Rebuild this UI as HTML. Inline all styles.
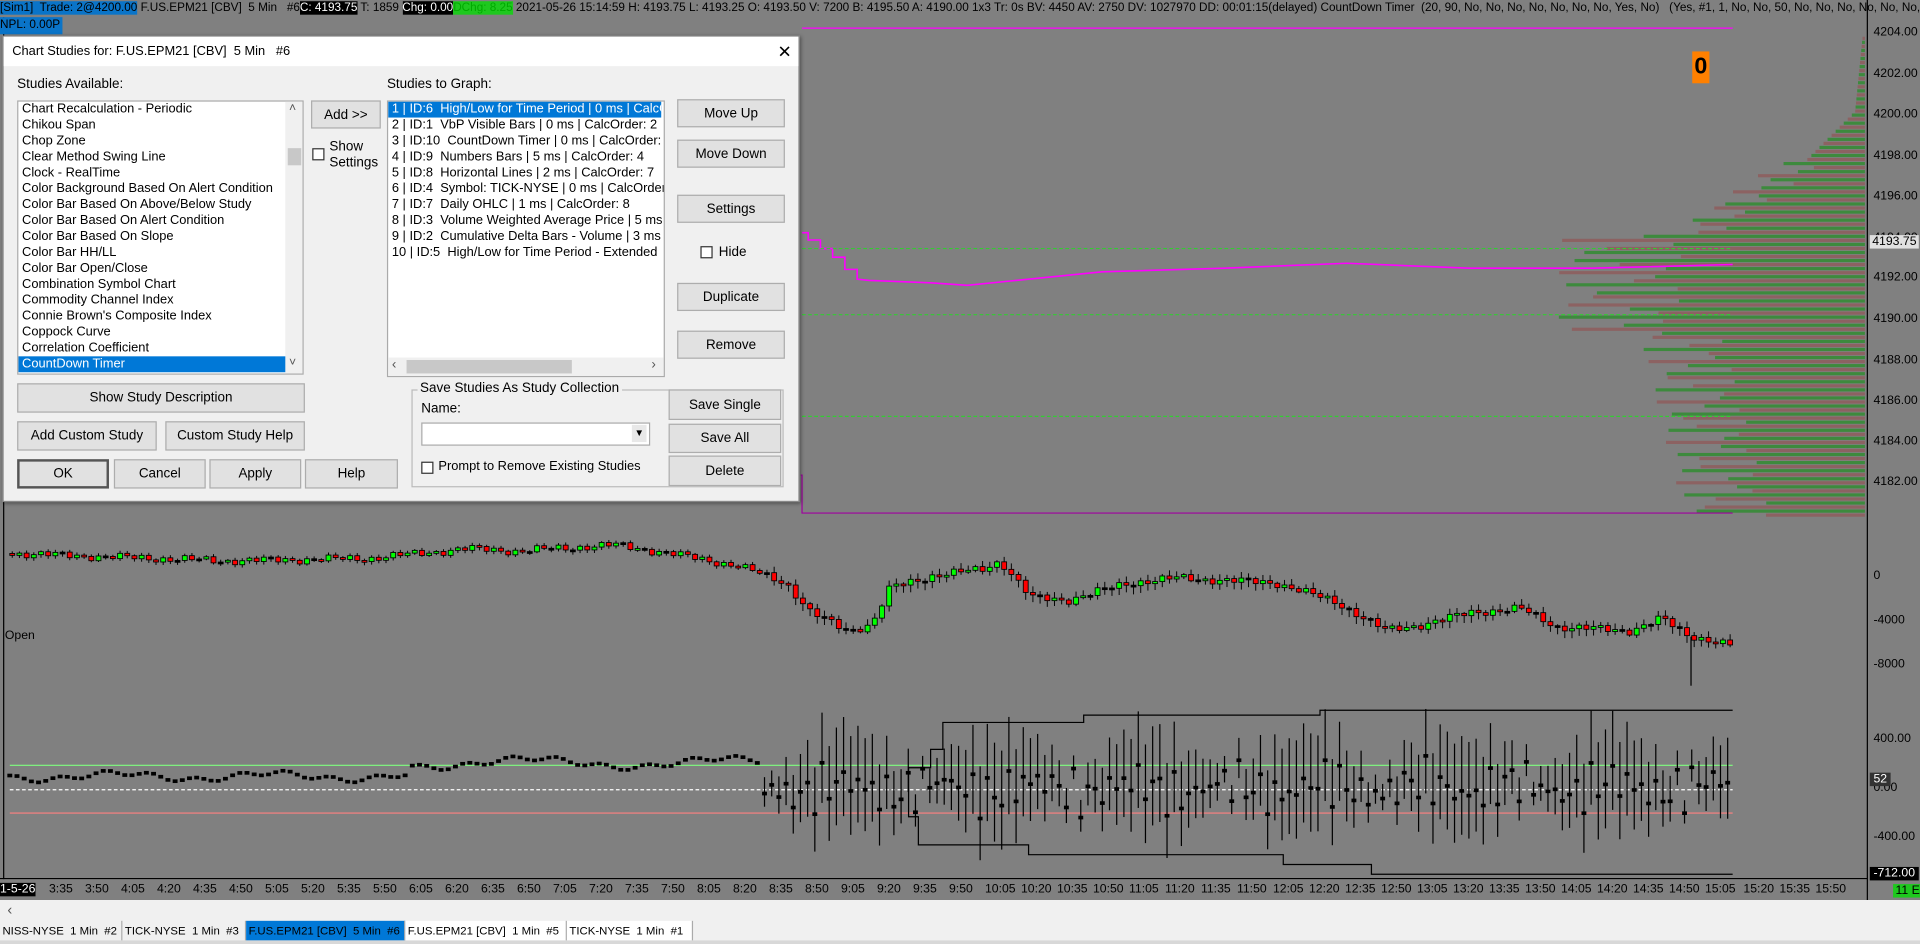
<!DOCTYPE html>
<html><head><meta charset="utf-8"><style>
html,body{margin:0;padding:0;width:1920px;height:944px;overflow:hidden;background:#808080}
#w{position:absolute;left:0;top:0;width:1568px;height:771px;transform:scale(1.22449);transform-origin:0 0;font-family:"Liberation Sans",sans-serif;font-size:11px;color:#000;background:#808080;overflow:hidden}
.a{position:absolute;white-space:nowrap}
.btn{position:absolute;background:#e1e1e1;border:1px solid #adadad;box-sizing:border-box;text-align:center;font-size:11px;display:flex;align-items:center;justify-content:center;white-space:nowrap}
.cb{position:absolute;width:10px;height:10px;border:1px solid #333;background:#fff;box-sizing:border-box}
.li{height:13px;line-height:13px;padding-left:3px;font-size:10.5px;white-space:nowrap;overflow:hidden}
.ax{position:absolute;left:1530px;font-size:10px}
.tm{position:absolute;top:721px;font-size:10px;color:#000}
.tab{position:absolute;top:752px;height:16px;line-height:16px;font-size:9.3px;border-right:1px solid #aaa;background:#f0f0f0;padding-left:2px;box-sizing:border-box;white-space:nowrap;overflow:hidden}
</style></head><body><div id="w">
<svg id="ch" width="1568" height="771" style="position:absolute;left:0;top:0"></svg>

<div class="a" style="left:0;top:0;height:14px;line-height:14px;font-size:9.6px">
<span style="background:#0a74c8;color:#000">[Sim1]&nbsp; Trade: 2@4200.00</span> F.US.EPM21 [CBV]&nbsp; 5 Min&nbsp;&nbsp; #6<span style="background:#000;color:#fff">C: 4193.75</span> T: 1859 <span style="background:#000;color:#fff">Chg: 0.00</span><span style="background:#1ec81e;color:#0a0">DChg: 8.25</span> 2021-05-26 15:14:59 H: 4193.75 L: 4193.25 O: 4193.50 V: 7200 B: 4195.50 A: 4190.00 1x3 Tr: 0s BV: 4450 AV: 2750 DV: 1027970 DD: 00:01:15(delayed) CountDown Timer&nbsp; (20, 90, No, No, No, No, No, No, No, Yes, No)&nbsp;&nbsp; (Yes, #1, 1, No, No, 50, No, No, No, No, No, No, No,</div>
<div class="a" style="left:0;top:14px;height:14px;line-height:14px;font-size:9.6px;background:#0a74c8;padding-right:2px">NPL: 0.00P</div>

<div class="a" style="left:1382px;top:42px;width:14px;height:26px;background:#ff8000;font-weight:bold;font-size:19px;line-height:26px;text-align:center">0</div>
<div class="a" style="left:4px;top:514px;font-size:10px">Open</div>

<div class="ax" style="top:21px">4204.00</div><div class="ax" style="top:55px">4202.00</div><div class="ax" style="top:88px">4200.00</div><div class="ax" style="top:122px">4198.00</div><div class="ax" style="top:155px">4196.00</div><div class="ax" style="top:189px">4194.00</div>
<div class="ax" style="top:192px;background:#e0e0e0;left:1527px;padding:0 2px">4193.75</div>
<div class="ax" style="top:221px">4192.00</div><div class="ax" style="top:255px">4190.00</div><div class="ax" style="top:289px">4188.00</div><div class="ax" style="top:322px">4186.00</div><div class="ax" style="top:355px">4184.00</div><div class="ax" style="top:388px">4182.00</div>
<div class="ax" style="top:465px">0</div><div class="ax" style="top:501px">-4000</div><div class="ax" style="top:537px">-8000</div>
<div class="ax" style="top:598px">400.00</div><div class="ax" style="top:638px">0.00</div><div class="ax" style="top:678px">-400.00</div>
<div class="ax" style="top:631px;background:#333;color:#fff;left:1527px;padding:0 3px">52</div>
<div class="ax" style="top:708px;background:#000;color:#fff;left:1527px;padding:0 3px">-712.00</div>
<div class="a" style="left:1546px;top:722px;background:#1ec81e;font-size:10px;padding:0 2px">11 E</div>

<div class="a" style="left:0;top:721px;background:#000;color:#fff;font-size:10px">1-5-26</div>
<div id="times"></div>

<div class="a" style="left:0;top:735px;width:1568px;height:17px;background:#f0f0f0"></div>
<div class="a" style="left:6px;top:736px;font-size:12px;color:#555">‹</div>
<div class="a" style="left:0;top:751px;width:1568px;height:20px;background:#f0f0f0"></div>
<div class="tab" style="left:0;width:100px">NISS-NYSE&nbsp; 1 Min&nbsp; #2</div>
<div class="tab" style="left:100px;width:101px">TICK-NYSE&nbsp; 1 Min&nbsp; #3</div>
<div class="tab" style="left:201px;width:130px;background:#0078d7">F.US.EPM21 [CBV]&nbsp; 5 Min&nbsp; #6</div>
<div class="tab" style="left:331px;width:132px;background:#fff">F.US.EPM21 [CBV]&nbsp; 1 Min&nbsp; #5</div>
<div class="tab" style="left:463px;width:103px;background:#fff">TICK-NYSE&nbsp; 1 Min&nbsp; #1</div>
<div class="a" style="left:0;top:768px;width:1568px;height:3px;background:#d8d8d8"></div>

<div class="a" style="left:2px;top:29px;width:651px;height:381px;background:#f0f0f0;border:1px solid #888;box-sizing:border-box;box-shadow:1px 1px 3px rgba(0,0,0,.4)">
<div class="a" style="left:0;top:0;width:649px;height:24px;background:#fff"></div>
<div class="a" style="left:7px;top:6px;font-size:10.5px">Chart Studies for: F.US.EPM21 [CBV]&nbsp; 5 Min&nbsp;&nbsp; #6</div>
<div class="a" style="left:632px;top:4px;font-size:14px">✕</div>
</div>
<div class="a" style="left:14px;top:63px;font-size:11px">Studies Available:</div>
<div class="a" style="left:14px;top:82px;width:234px;height:224px;background:#fff;border:1px solid #aaa;box-sizing:border-box;overflow:hidden">
<div style="width:219px">
<div class="li">Chart Recalculation - Periodic</div><div class="li">Chikou Span</div><div class="li">Chop Zone</div><div class="li">Clear Method Swing Line</div><div class="li">Clock - RealTime</div><div class="li">Color Background Based On Alert Condition</div><div class="li">Color Bar Based On Above/Below Study</div><div class="li">Color Bar Based On Alert Condition</div><div class="li">Color Bar Based On Slope</div><div class="li">Color Bar HH/LL</div><div class="li">Color Bar Open/Close</div><div class="li">Combination Symbol Chart</div><div class="li">Commodity Channel Index</div><div class="li">Connie Brown's Composite Index</div><div class="li">Coppock Curve</div><div class="li">Correlation Coefficient</div><div class="li" style="background:#0078d7;color:#fff">CountDown Timer</div><div class="li">Cumulative</div>
</div>
<div class="a" style="left:218px;top:0;width:14px;height:222px;background:#f0f0f0"></div>
<div class="a" style="left:221px;top:0;font-size:10px;color:#555">˄</div>
<div class="a" style="left:220px;top:38px;width:11px;height:14px;background:#c8c8c8"></div>
<div class="a" style="left:221px;top:208px;font-size:10px;color:#555">˅</div>
</div>
<div class="btn" style="left:254px;top:82px;width:57px;height:23px">Add &gt;&gt;</div>
<div class="cb" style="left:255px;top:121px"></div>
<div class="a" style="left:269px;top:114px;font-size:11px;line-height:13px">Show<br>Settings</div>

<div class="a" style="left:316px;top:63px;font-size:11px">Studies to Graph:</div>
<div class="a" style="left:316px;top:82px;width:227px;height:226px;background:#fff;border:1px solid #aaa;box-sizing:border-box;overflow:hidden">
<div style="width:225px">
<div class="li" style="background:#0078d7;color:#fff;margin-right:2px">1 | ID:6&nbsp; High/Low for Time Period | 0 ms | CalcOrder: 1</div>
<div class="li">2 | ID:1&nbsp; VbP Visible Bars | 0 ms | CalcOrder: 2</div>
<div class="li">3 | ID:10&nbsp; CountDown Timer | 0 ms | CalcOrder: 3</div>
<div class="li">4 | ID:9&nbsp; Numbers Bars | 5 ms | CalcOrder: 4</div>
<div class="li">5 | ID:8&nbsp; Horizontal Lines | 2 ms | CalcOrder: 7</div>
<div class="li">6 | ID:4&nbsp; Symbol: TICK-NYSE | 0 ms | CalcOrder: 5</div>
<div class="li">7 | ID:7&nbsp; Daily OHLC | 1 ms | CalcOrder: 8</div>
<div class="li">8 | ID:3&nbsp; Volume Weighted Average Price | 5 ms</div>
<div class="li">9 | ID:2&nbsp; Cumulative Delta Bars - Volume | 3 ms</div>
<div class="li">10 | ID:5&nbsp; High/Low for Time Period - Extended</div>
</div>
<div class="a" style="left:0;top:209px;width:225px;height:15px;background:#f0f0f0"></div>
<div class="a" style="left:15px;top:211px;width:135px;height:11px;background:#c8c8c8"></div>
<div class="a" style="left:3px;top:209px;font-size:11px;color:#555">‹</div>
<div class="a" style="left:215px;top:209px;font-size:11px;color:#555">›</div>
</div>

<div class="btn" style="left:553px;top:81px;width:88px;height:23px">Move Up</div>
<div class="btn" style="left:553px;top:114px;width:88px;height:23px">Move Down</div>
<div class="btn" style="left:553px;top:159px;width:88px;height:23px">Settings</div>
<div class="cb" style="left:572px;top:201px"></div>
<div class="a" style="left:587px;top:200px;font-size:11px">Hide</div>
<div class="btn" style="left:553px;top:231px;width:88px;height:23px">Duplicate</div>
<div class="btn" style="left:553px;top:270px;width:88px;height:23px">Remove</div>

<div class="btn" style="left:14px;top:313px;width:235px;height:24px">Show Study Description</div>
<div class="btn" style="left:14px;top:344px;width:114px;height:24px">Add Custom Study</div>
<div class="btn" style="left:135px;top:344px;width:114px;height:24px">Custom Study Help</div>
<div class="btn" style="left:14px;top:375px;width:75px;height:24px;border:2px solid #555">OK</div>
<div class="btn" style="left:93px;top:375px;width:75px;height:24px">Cancel</div>
<div class="btn" style="left:171px;top:375px;width:75px;height:24px">Apply</div>
<div class="btn" style="left:249px;top:375px;width:76px;height:24px">Help</div>

<div class="a" style="left:336px;top:318px;width:304px;height:80px;border:1px solid #bbb;box-sizing:border-box"></div>
<div class="a" style="left:341px;top:311px;font-size:11px;background:#f0f0f0;padding:0 2px">Save Studies As Study Collection</div>
<div class="a" style="left:344px;top:328px;font-size:11px">Name:</div>
<div class="a" style="left:344px;top:345px;width:187px;height:19px;background:#fff;border:1px solid #aaa;box-sizing:border-box"></div>
<div class="a" style="left:516px;top:347px;width:12px;height:14px;background:#e8e8e8;font-size:8px;text-align:center;line-height:14px">▼</div>
<div class="cb" style="left:344px;top:377px"></div>
<div class="a" style="left:358px;top:375px;font-size:10.5px">Prompt to Remove Existing Studies</div>
<div class="btn" style="left:546px;top:318px;width:92px;height:25px">Save Single</div>
<div class="btn" style="left:546px;top:346px;width:92px;height:24px">Save All</div>
<div class="btn" style="left:546px;top:372px;width:92px;height:25px">Delete</div>

<script>
(function(){
var s=document.getElementById('ch'),h='';
function L(x1,y1,x2,y2,c,w,d){h+='<line x1="'+x1+'" y1="'+y1+'" x2="'+x2+'" y2="'+y2+'" stroke="'+c+'" stroke-width="'+(w||1)+'"'+(d?' stroke-dasharray="'+d+'"':'')+'/>';}
function R(x,y,w,hh,c,st){h+='<rect x="'+x+'" y="'+y+'" width="'+w+'" height="'+hh+'" fill="'+c+'"'+(st?' stroke="'+st+'" stroke-width="0.7"':'')+'/>';}
L(1525,0,1525,735,'#000',1);L(3,14,3,718,'#000',1);L(0,717.5,1525,717.5,'#000',1);
for(var y=30,i=0;y<420;y+=3.3,i++){var w;
 if(y<90)w=2+(y-30)*0.1;else if(y<130)w=8+(y-90)*1.0;else if(y<190)w=50+(y-130)*1.5+Math.sin(i*1.7)*20;else if(y<270)w=170+Math.sin(i*2.3)*50+30;else w=150+Math.sin(i*1.9)*35-(y-270)*0.25;
 w=Math.max(2,w);R(1523-w,y,w,2.6,i%2?'#3d8a3d':'#8c6262');}
L(655,23,1415,23,'#ff00ff',1);
h+='<polyline fill="none" stroke="#ff00ff" stroke-width="1.3" points="655,190 660,190 660,196 670,196 670,203 680,203 680,210 690,210 690,220 700,220 700,228 710,229 760,231 790,233 820,230 900,222 1000,219 1100,215 1200,219 1300,219 1340,218 1415,216"/>';
h+='<polyline fill="none" stroke="#a000a0" stroke-width="1" points="654,388 655,388 655,419 1415,419"/>';
L(655,203,1415,203,'#3c3',1,'3,2');L(655,257,1415,257,'#3c3',1,'3,2');L(655,340,1415,340,'#3c3',1,'3,2');
var kp=[[8,452],[180,458],[300,456],[380,448],[420,450],[500,445],[540,451],[600,462],[640,476],[660,500],[690,515],[710,510],[725,480],[760,470],[800,465],[815,458],[840,488],[870,490],[920,476],[960,472],[1040,476],[1090,492],[1130,515],[1160,510],[1200,500],[1240,497],[1270,512],[1330,515],[1355,505],[1375,518],[1410,527]];
function P(x){for(var k=1;k<kp.length;k++){if(x<=kp[k][0]){var a=kp[k-1],b=kp[k],t=(x-a[0])/(b[0]-a[0]);return a[1]+(b[1]-a[1])*t;}}return 527;}
var prev=P(8);
for(var x=8;x<=1412;x+=5.87){var c=P(x)+Math.sin(x*0.37)*2.2+Math.sin(x*0.11)*1.5;var o=prev;var vol=(x>620)?1:0.3;
 var tp=Math.min(o,c),bt=Math.max(o,c);if(bt-tp<1.5){bt=tp+1.5;}
 var hi=tp-1-Math.abs(Math.sin(x*0.7))*4*vol,lo=bt+1+Math.abs(Math.cos(x*0.5))*5*vol;
 L(x+2,hi,x+2,lo,'#000',0.8);
 var col=Math.abs(c-o)<0.8?'#000':(c<o?'#00ff00':'#ff0000');R(x,tp,4,bt-tp,col,'#000');prev=c;}
L(1381,520,1381,560,'#000',1);
L(8,625,1415,625,'#7fff7f',1);L(8,664,1415,664,'#ff8080',1);L(8,645,1415,645,'#fff',1,'3,2');
for(var x=6;x<1412;x+=5.87){var base;if(x<330)base=634+Math.sin(x*0.05)*3;else if(x<620)base=623+Math.sin(x*0.04)*4;else base=632+Math.sin(x*0.08)*6;
 if(x<620){var v=base+Math.sin(x*0.9)*2;R(x,v-1.5,4,3,'#000');}
 else{var a=Math.sin(x*1.3)*Math.sin(x*0.23)*40+Math.cos(x*0.7)*15;var v=base+a*0.6;var amp=10+Math.abs(Math.sin(x*0.51))*35;
  L(x+2,v-amp,x+2,v+amp*0.8,'#000',1);R(x,v-1.5,4,3,'#000');}}
h+='<polyline fill="none" stroke="#000" stroke-width="1" points="742,640 742,627 760,627 760,612 770,612 770,590 885,590 885,584 1078,584 1078,580 1415,580"/>';
h+='<polyline fill="none" stroke="#000" stroke-width="1" points="742,640 742,667 750,667 750,690 840,690 840,698 1048,698 1048,706 1120,706 1120,714 1415,714"/>';
s.innerHTML=h;
var tl=['3:35','3:50','4:05','4:20','4:35','4:50','5:05','5:20','5:35','5:50','6:05','6:20','6:35','6:50','7:05','7:20','7:35','7:50','8:05','8:20','8:35','8:50','9:05','9:20','9:35','9:50','10:05','10:20','10:35','10:50','11:05','11:20','11:35','11:50','12:05','12:20','12:35','12:50','13:05','13:20','13:35','13:50','14:05','14:20','14:35','14:50','15:05','15:20','15:35','15:50'];
var th='';for(var i=0;i<tl.length;i++){var x=40+i*29.4;if(i>=47)x+=2;th+='<div class="tm" style="left:'+x+'px">'+tl[i]+'</div>';}
document.getElementById('times').innerHTML=th;
})();
</script>
</div></body></html>
